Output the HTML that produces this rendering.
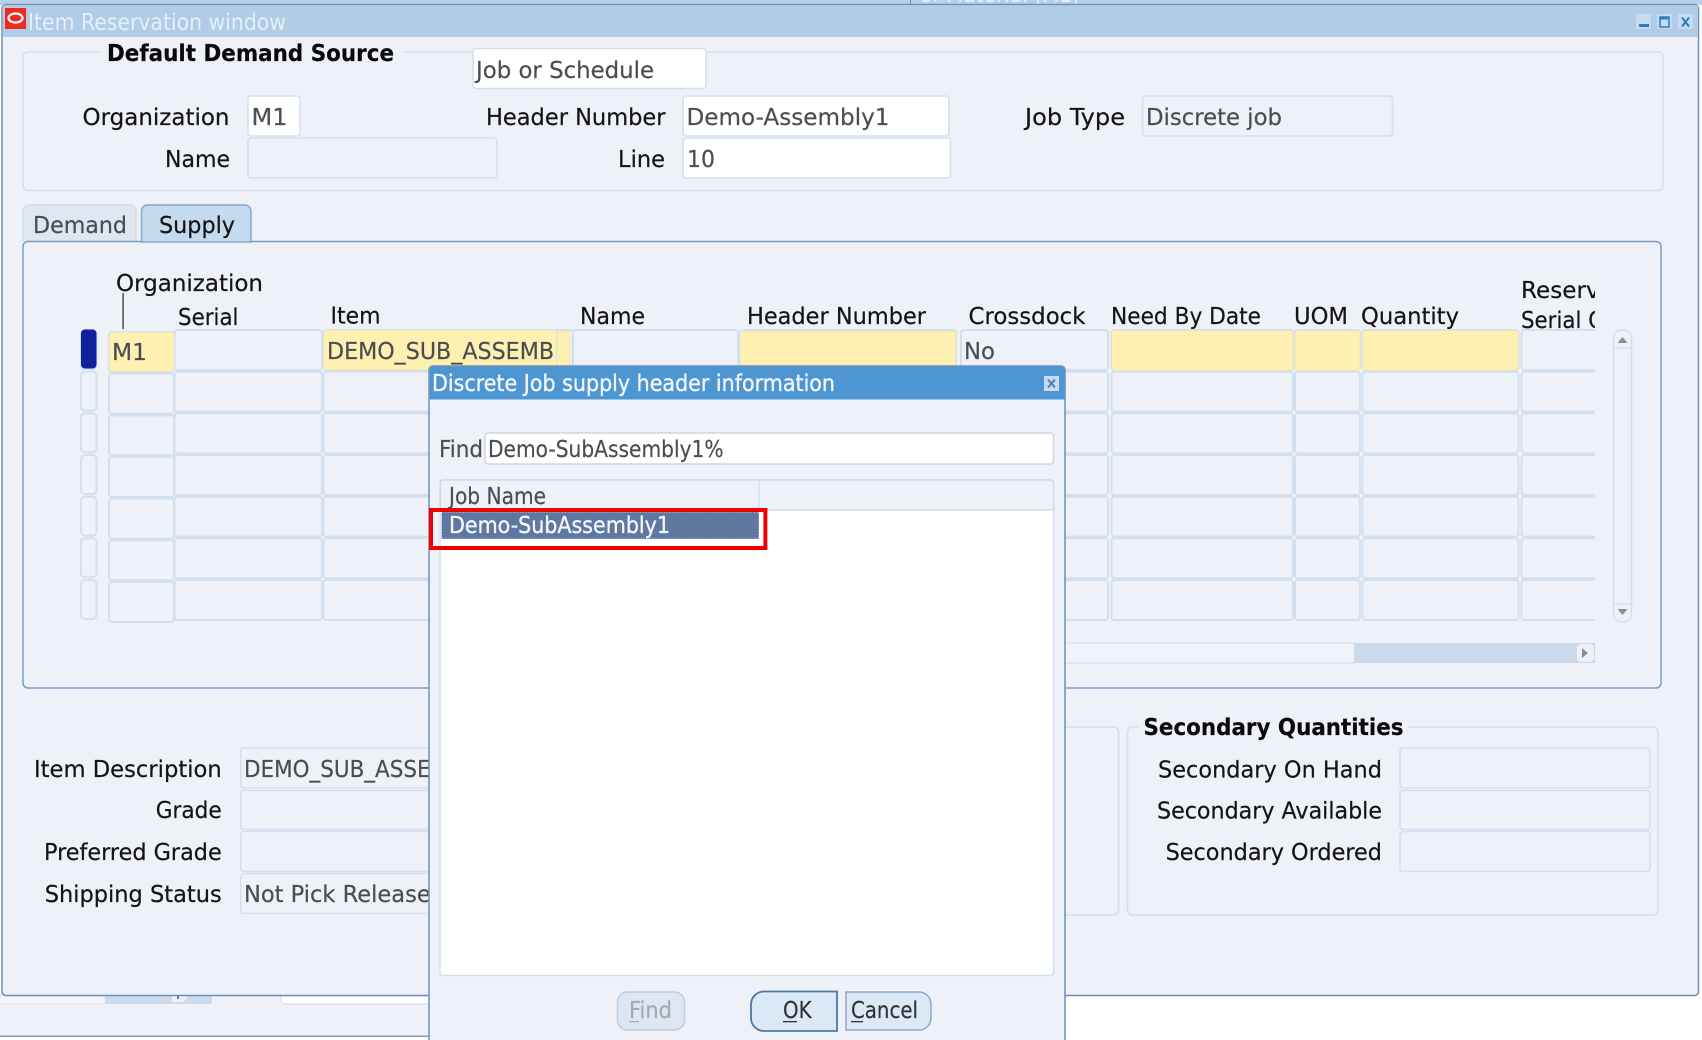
<!DOCTYPE html>
<html>
<head>
<meta charset="utf-8">
<style>
html,body{margin:0;padding:0;background:#fff;width:1702px;height:1040px;overflow:hidden}
svg{display:block;filter:blur(.35px)}
text{font-family:"DejaVu Sans","Liberation Sans",sans-serif;font-size:23px;fill:#141414;stroke:#141414;stroke-width:.2}
.v{fill:#4a4d52;stroke:#4a4d52}
.b{font-weight:bold;fill:#0a0a0a;stroke:#0a0a0a}
.f{fill:#eef1f8;stroke:#d3dff0;stroke-width:1.6}
.w{fill:#fff;stroke:#d3dff0;stroke-width:1.6}
.y{fill:#fdf0b0;stroke:#e6e4c8;stroke-width:1}
.c{fill:#eef1f8;stroke:#d2dfef;stroke-width:2}
</style>
</head>
<body>
<svg width="1702" height="1040" viewBox="0 0 1702 1040" xmlns="http://www.w3.org/2000/svg">
<defs>
<clipPath id="cl1"><rect x="70" y="250" width="1525" height="390"/></clipPath>
<clipPath id="cl2"><rect x="327" y="335" width="227" height="35"/></clipPath>
<g id="row">
<rect class="c" x="81" y="0" width="15.5" height="39" rx="4"/>
<rect class="c" x="109" y="2" width="65" height="40" rx="3"/>
<rect class="c" x="174.500" y="0" width="147.500" height="40" rx="3"/>
<rect class="c" x="323.500" y="0" width="250" height="40" rx="3"/>
<rect class="c" x="573" y="0" width="165" height="40" rx="3"/>
<rect class="c" x="740" y="0" width="216" height="40" rx="3"/>
<rect class="c" x="961" y="0" width="147" height="40" rx="3"/>
<rect class="c" x="1111.500" y="0" width="181.500" height="40" rx="3"/>
<rect class="c" x="1295" y="0" width="65" height="40" rx="3"/>
<rect class="c" x="1362.500" y="0" width="156" height="40" rx="3"/>
<rect class="c" x="1521.500" y="0" width="90" height="40" rx="3"/>
</g>
</defs>

<!-- background window strip on top -->
<rect x="0" y="0" width="1702" height="5" fill="#b8d0e8"/>
<rect x="910" y="0" width="1" height="5" fill="#6d8fbb"/>
<text x="920" y="2" style="fill:#e8eff8;stroke:none" textLength="160" lengthAdjust="spacingAndGlyphs">of Material (M1)</text>

<!-- bottom background strip -->
<rect x="0" y="990" width="440" height="46" fill="#eef1f8"/>
<rect x="0" y="996" width="105" height="8" fill="#f4f6fb" stroke="#dfe7f3" stroke-width="1"/>
<path d="M105 996H212V1001a3 3 0 0 1-3 3H105Z" fill="#ccdaec"/>
<path d="M172 996H188a8 8 0 0 1-8 6H172Z" fill="#eef1f8"/>
<rect x="177" y="996" width="2" height="3" fill="#66788f"/>
<path d="M281 996V1001a3 3 0 0 0 3 3H432V996Z" fill="#fff" stroke="#d3dff0" stroke-width="1.200"/>
<rect x="0" y="1035.500" width="440" height="1.500" fill="#7a9cc4"/>

<!-- main window -->
<rect x="2" y="4.500" width="1696.500" height="991" rx="4" fill="#eef1f8" stroke="#6d8fbb" stroke-width="1.500"/>
<rect x="3" y="5.500" width="1695" height="31.500" fill="#b0cce6"/>
<rect x="5" y="8" width="21" height="21" fill="#ee2a1c"/>
<ellipse cx="15.500" cy="18" rx="7" ry="4.500" fill="none" stroke="#fff" stroke-width="2.200"/>
<text x="28" y="30" style="fill:#e6eef7;stroke:none" textLength="258" lengthAdjust="spacingAndGlyphs">Item Reservation window</text>

<rect x="1636" y="14" width="15" height="15" fill="#c7dbee"/>
<rect x="1639" y="24" width="10" height="3" fill="#2d7dc0"/>
<rect x="1657" y="14" width="15" height="15" fill="#c7dbee"/>
<rect x="1660" y="17" width="9" height="10" fill="none" stroke="#2d7dc0" stroke-width="1.500"/>
<rect x="1660" y="17" width="9" height="2.500" fill="#2d7dc0"/>
<rect x="1678" y="14" width="15" height="15" fill="#c7dbee"/>
<path d="M1682 17.500L1689 26.500M1689 17.500L1682 26.500" stroke="#2d7dc0" stroke-width="2" fill="none"/>

<!-- Default Demand Source -->
<rect x="23" y="52" width="1640" height="138.500" rx="5" fill="none" stroke="#d3dff0" stroke-width="1.600"/>
<rect x="100" y="46" width="303" height="12" fill="#eef1f8"/>
<text class="b" x="107" y="61" textLength="287" lengthAdjust="spacingAndGlyphs">Default Demand Source</text>
<rect class="w" x="473" y="48.500" width="233" height="40" rx="3"/>
<text class="v" x="476" y="78" textLength="178" lengthAdjust="spacingAndGlyphs">Job or Schedule</text>

<text x="82.500" y="125" textLength="147" lengthAdjust="spacingAndGlyphs">Organization</text>
<rect class="w" x="248" y="96" width="52" height="40" rx="3"/>
<text class="v" x="251.500" y="125" textLength="36" lengthAdjust="spacingAndGlyphs">M1</text>
<text x="165" y="167" textLength="65" lengthAdjust="spacingAndGlyphs">Name</text>
<rect class="f" x="248" y="138" width="249" height="40" rx="3"/>

<text x="486" y="125" textLength="179.500" lengthAdjust="spacingAndGlyphs">Header Number</text>
<rect class="w" x="683" y="96" width="266" height="40" rx="3"/>
<text class="v" x="686.500" y="125" textLength="203" lengthAdjust="spacingAndGlyphs">Demo-Assembly1</text>
<text x="618" y="167" textLength="47" lengthAdjust="spacingAndGlyphs">Line</text>
<rect class="w" x="683" y="138" width="267.500" height="40" rx="3"/>
<text class="v" x="687" y="167" textLength="28" lengthAdjust="spacingAndGlyphs">10</text>

<text x="1025" y="125" textLength="100" lengthAdjust="spacingAndGlyphs">Job Type</text>
<rect class="f" x="1142.500" y="96" width="250" height="40" rx="3"/>
<text class="v" x="1146" y="125" textLength="136" lengthAdjust="spacingAndGlyphs">Discrete job</text>

<!-- Tabs -->
<path d="M23 241V211a6 6 0 0 1 6-6H130a6 6 0 0 1 6 6V241" fill="#dde6f1" stroke="#d0dcec" stroke-width="1.500"/>
<text class="v" x="33" y="233" textLength="94" lengthAdjust="spacingAndGlyphs">Demand</text>
<rect x="23" y="241.500" width="1638" height="446.500" rx="5" fill="#eef1f8" stroke="#7a9cc4" stroke-width="1.500"/>
<path d="M141.500 242V211a6 6 0 0 1 6-6H245a6 6 0 0 1 6 6V242Z" fill="#c4daee" stroke="#8aa8cc" stroke-width="1.500"/>
<text x="159" y="233" textLength="76" lengthAdjust="spacingAndGlyphs">Supply</text>

<!-- Column headers -->
<text x="116" y="291" textLength="147" lengthAdjust="spacingAndGlyphs">Organization</text>
<rect x="122.500" y="293" width="1.200" height="36" fill="#222"/>
<text x="178" y="325" textLength="60.500" lengthAdjust="spacingAndGlyphs">Serial</text>
<text x="330.500" y="323.500" textLength="50" lengthAdjust="spacingAndGlyphs">Item</text>
<text x="580" y="324" textLength="65" lengthAdjust="spacingAndGlyphs">Name</text>
<text x="747" y="324" textLength="179" lengthAdjust="spacingAndGlyphs">Header Number</text>
<text x="968.500" y="324" textLength="117" lengthAdjust="spacingAndGlyphs">Crossdock</text>
<text x="1111" y="324" textLength="150" lengthAdjust="spacingAndGlyphs">Need By Date</text>
<text x="1294" y="324" textLength="54" lengthAdjust="spacingAndGlyphs">UOM</text>
<text x="1361" y="324" textLength="98" lengthAdjust="spacingAndGlyphs">Quantity</text>
<g clip-path="url(#cl1)">
<text x="1521" y="298" textLength="137" lengthAdjust="spacingAndGlyphs">Reservation</text>
<text x="1521" y="328" textLength="105" lengthAdjust="spacingAndGlyphs">Serial Qty</text>

<!-- Grid rows -->
<use href="#row" y="330"/>
<use href="#row" y="371.660"/>
<use href="#row" y="413.320"/>
<use href="#row" y="455"/>
<use href="#row" y="496.640"/>
<use href="#row" y="538.300"/>
<use href="#row" y="580"/>
</g>
<!-- first row highlights -->
<rect x="81" y="329.500" width="15.500" height="39" rx="4" fill="#10219c"/>
<rect class="y" x="109" y="332" width="65" height="39.500" rx="3"/>
<rect class="y" x="323.500" y="330" width="233" height="40" rx="3"/>
<rect class="y" x="557" y="331" width="13" height="39" rx="1"/>
<rect class="y" x="740" y="331" width="216" height="39.500" rx="3"/>
<rect class="y" x="1111.500" y="330.500" width="181.500" height="40" rx="3"/>
<rect class="y" x="1295" y="330.500" width="65" height="40" rx="3"/>
<rect class="y" x="1362.500" y="330.500" width="156" height="40" rx="3"/>
<text class="v" x="112" y="360" textLength="35" lengthAdjust="spacingAndGlyphs">M1</text>
<g clip-path="url(#cl2)"><text class="v" x="327" y="359" textLength="250" lengthAdjust="spacingAndGlyphs">DEMO_SUB_ASSEMBLY</text></g>
<text class="v" x="964" y="359" textLength="31" lengthAdjust="spacingAndGlyphs">No</text>

<!-- Vertical scrollbar -->
<rect x="1613.500" y="330" width="18" height="292" rx="8" fill="#eef1f8" stroke="#d3dff0" stroke-width="1.500"/>
<line x1="1613.500" y1="348" x2="1631.500" y2="348" stroke="#d3dff0" stroke-width="1.500"/>
<line x1="1613.500" y1="604" x2="1631.500" y2="604" stroke="#d3dff0" stroke-width="1.500"/>
<path d="M1622.500 337l5 6h-10z" fill="#858f9c"/>
<path d="M1622.500 615l5-6h-10z" fill="#858f9c"/>

<!-- Horizontal scrollbar -->
<rect x="1000" y="643" width="354.500" height="20" fill="#f0f3f9" stroke="#d3dff0" stroke-width="1.200"/>
<rect x="1354" y="643" width="241" height="20" fill="#ccdaec"/>
<rect x="1577" y="644" width="17" height="18" rx="4" fill="#eef1f8"/>
<path d="M1582 648l6 5-6 5z" fill="#858f9c"/>

<!-- Lower left -->
<text x="34" y="777" textLength="187.700" lengthAdjust="spacingAndGlyphs">Item Description</text>
<text x="155.700" y="818" textLength="66" lengthAdjust="spacingAndGlyphs">Grade</text>
<text x="44" y="860" textLength="177.700" lengthAdjust="spacingAndGlyphs">Preferred Grade</text>
<text x="44.700" y="902" textLength="177" lengthAdjust="spacingAndGlyphs">Shipping Status</text>
<rect class="f" x="240.700" y="748" width="230" height="40" rx="3"/>
<rect class="f" x="240.700" y="790.500" width="230" height="39" rx="3"/>
<rect class="f" x="240.700" y="831.500" width="230" height="40" rx="3"/>
<rect class="f" x="240.700" y="873.500" width="230" height="40" rx="3"/>
<text class="v" x="244" y="777" textLength="242" lengthAdjust="spacingAndGlyphs">DEMO_SUB_ASSEMBLY</text>
<text class="v" x="244" y="902" textLength="201" lengthAdjust="spacingAndGlyphs">Not Pick Released</text>

<!-- Middle box remnant -->
<rect x="1000" y="727" width="118.600" height="188" rx="5" fill="none" stroke="#d3dff0" stroke-width="1.600"/>

<!-- Secondary Quantities -->
<rect x="1127.500" y="727" width="530.500" height="188" rx="5" fill="none" stroke="#d3dff0" stroke-width="1.600"/>
<rect x="1138" y="720" width="270" height="14" fill="#eef1f8"/>
<text class="b" x="1143.500" y="735" textLength="260" lengthAdjust="spacingAndGlyphs">Secondary Quantities</text>
<text x="1158" y="777.500" textLength="224" lengthAdjust="spacingAndGlyphs">Secondary On Hand</text>
<text x="1157" y="818.500" textLength="225" lengthAdjust="spacingAndGlyphs">Secondary Available</text>
<text x="1165.600" y="860" textLength="216.400" lengthAdjust="spacingAndGlyphs">Secondary Ordered</text>
<rect class="f" x="1400" y="748" width="250" height="40" rx="3"/>
<rect class="f" x="1400" y="790.500" width="250" height="39" rx="3"/>
<rect class="f" x="1400" y="831.500" width="250" height="40" rx="3"/>

<!-- Dialog -->
<path d="M429 1042V370a4 4 0 0 1 4-4H1061a4 4 0 0 1 4 4V1042Z" fill="#eef1f8" stroke="#6d8fbb" stroke-width="1.500"/>
<path d="M429.700 399.500V370a3.500 3.500 0 0 1 3.500-3.500H1061a3.500 3.500 0 0 1 3.500 3.500V399.500Z" fill="#4e96d2"/>
<text x="432" y="391" style="fill:#f2f6fb;stroke:#f2f6fb;stroke-width:.35" textLength="403" lengthAdjust="spacingAndGlyphs">Discrete Job supply header information</text>
<rect x="1044" y="376" width="15" height="15" fill="#c7dbee"/>
<path d="M1048 379.500L1055 387.500M1055 379.500L1048 387.500" stroke="#3a83c4" stroke-width="2" fill="none"/>

<text class="v" x="439" y="457" textLength="44" lengthAdjust="spacingAndGlyphs">Find</text>
<rect x="485" y="433" width="568.500" height="31" rx="3" fill="#fff" stroke="#cfd6e0" stroke-width="1.500"/>
<text class="v" x="488" y="457" textLength="235.600" lengthAdjust="spacingAndGlyphs">Demo-SubAssembly1%</text>

<rect x="440" y="480" width="613.500" height="495.500" rx="3" fill="#fff" stroke="#d3dff0" stroke-width="1.500"/>
<path d="M440.500 510V483a3 3 0 0 1 3-3H1050.500a3 3 0 0 1 3 3V510Z" fill="#eef1f8" stroke="#cfd6e0" stroke-width="1.200"/>
<line x1="759" y1="481" x2="759" y2="510" stroke="#d3dff0" stroke-width="1.500"/>
<text class="v" x="449" y="504" textLength="97" lengthAdjust="spacingAndGlyphs">Job Name</text>

<rect x="441.500" y="512" width="317.500" height="27" fill="#5e78a2" stroke="#dfe4ee" stroke-width="1" stroke-dasharray="1.500 1.500"/>
<text x="449" y="533" style="fill:#f4f6fa;stroke:#f4f6fa;stroke-width:.35" textLength="221" lengthAdjust="spacingAndGlyphs">Demo-SubAssembly1</text>
<rect x="431" y="510" width="334.400" height="38" fill="none" stroke="#f00000" stroke-width="4"/>

<!-- Buttons -->
<rect x="617.500" y="992" width="67" height="38" rx="10" fill="#dde6f3" stroke="#c6ccd4" stroke-width="1.500"/>
<text x="629" y="1018" style="fill:#a6a8ac;stroke:#a6a8ac" textLength="43" lengthAdjust="spacingAndGlyphs">Find</text>
<rect x="629" y="1021" width="10" height="1.300" fill="#a6a8ac"/>

<path d="M837 991.500H764a13 13 0 0 0-13 13V1018a13 13 0 0 0 13 13H837Z" fill="#dbe8f6" stroke="#4f78a8" stroke-width="1.800"/>
<text x="783" y="1018" style="fill:#333;stroke:#333" textLength="28.600" lengthAdjust="spacingAndGlyphs">OK</text>
<rect x="783" y="1021" width="14" height="1.300" fill="#333"/>

<path d="M846 992H919a12 12 0 0 1 12 12V1018a12 12 0 0 1-12 12H846Z" fill="#dbe8f6" stroke="#8fa8c8" stroke-width="1.500"/>
<text x="851" y="1018" style="fill:#333;stroke:#333" textLength="67" lengthAdjust="spacingAndGlyphs">Cancel</text>
<rect x="851" y="1021" width="12" height="1.300" fill="#333"/>
</svg>
</body>
</html>
